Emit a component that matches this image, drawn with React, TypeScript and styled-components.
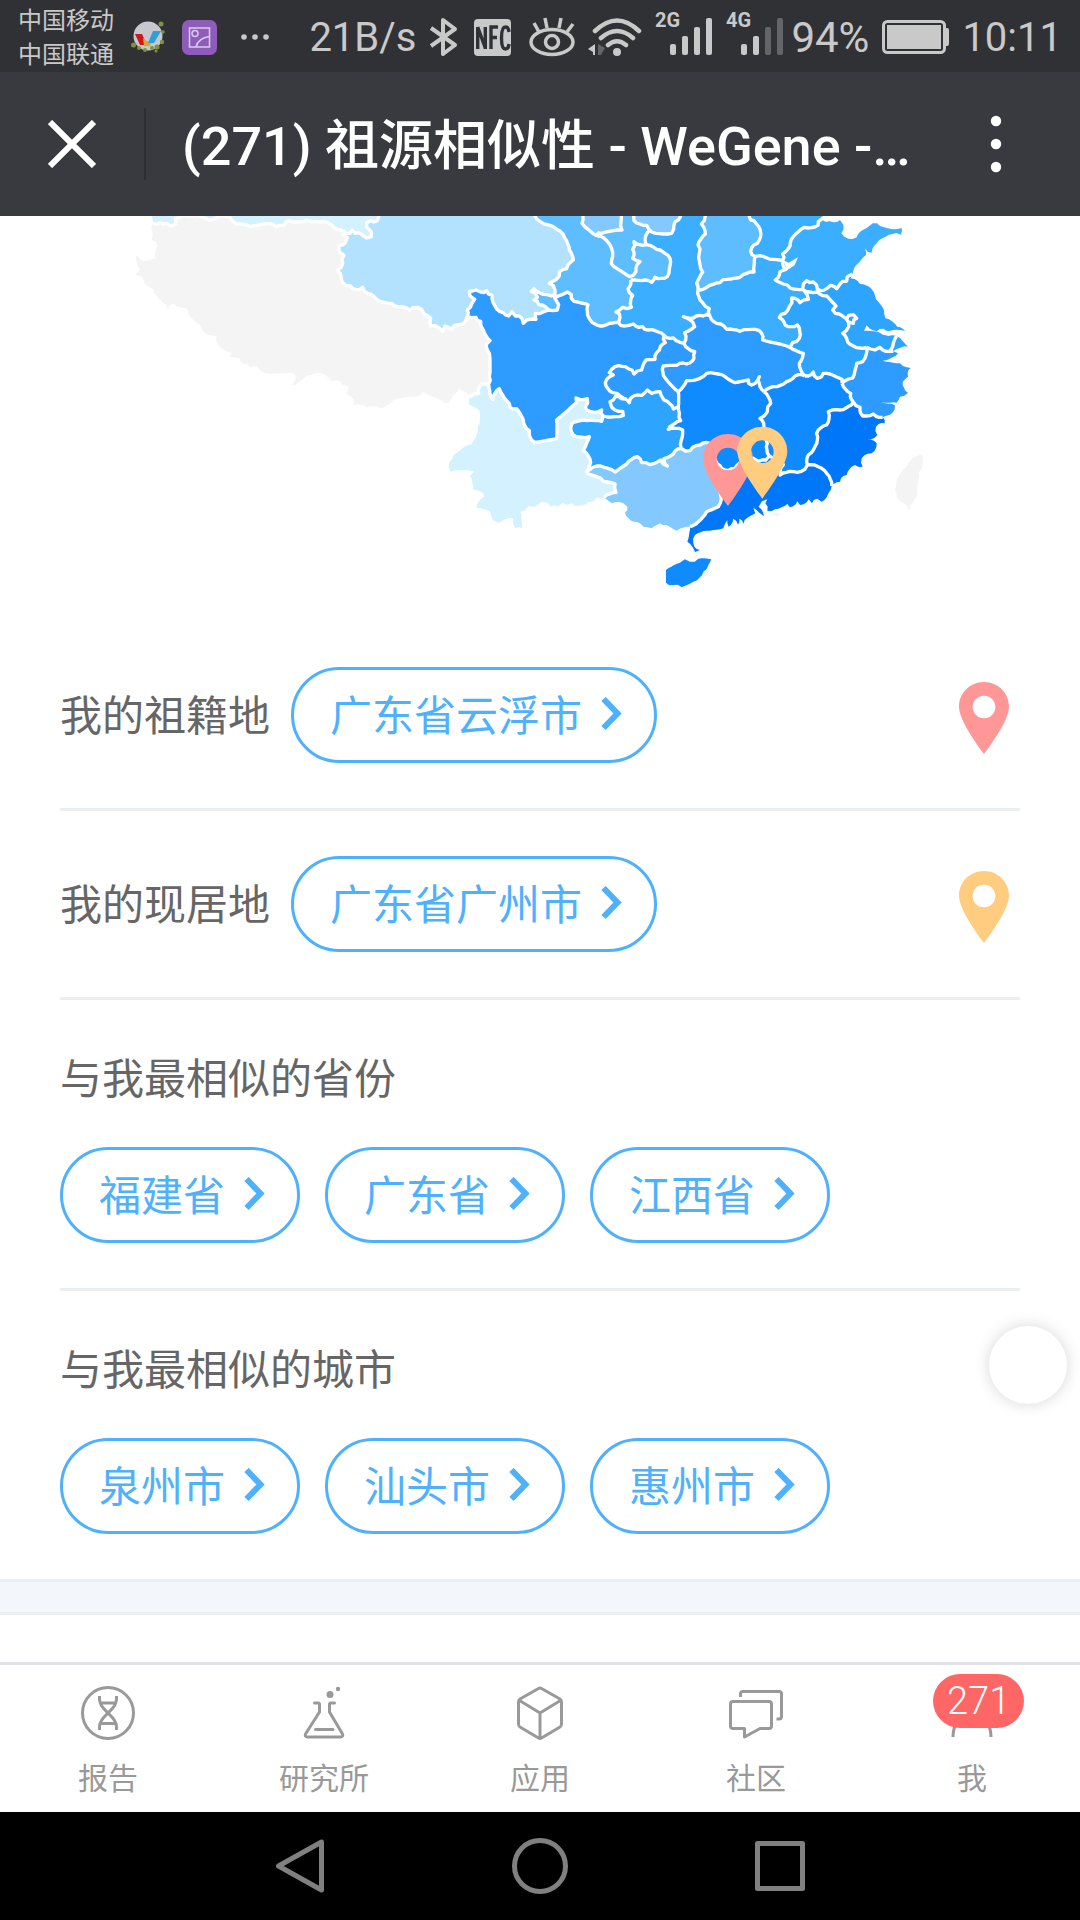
import React from 'react';
import styled, { createGlobalStyle } from 'styled-components';

/* ---------- map geometry: shared arcs joined into provinces ---------- */

type Pt = [number, number];

const roughen = (pts: Pt[]): Pt[] => {
  const out: Pt[] = [pts[0]];
  for (let i = 1; i < pts.length; i++) {
    const [ax, ay] = pts[i - 1];
    const [bx, by] = pts[i];
    const len = Math.hypot(bx - ax, by - ay);
    const steps = Math.min(5, Math.floor(len / 9));
    for (let s = 1; s < steps; s++) {
      const t = s / steps;
      const k = Math.sin(ax * 12.9 + ay * 78.2 + s * 37.7) * 4.5;
      out.push([
        Math.round(ax + (bx - ax) * t - ((by - ay) / len) * k),
        Math.round(ay + (by - ay) * t + ((bx - ax) / len) * k),
      ]);
    }
    out.push([bx, by]);
  }
  return out;
};

const arc = (dx: number, src: string): Pt[] =>
  roughen(
    src
      .trim()
      .split(/\s+/)
      .map((p) => {
        const [x, y] = p.split(',').map(Number);
        return [x + dx, y] as Pt;
      }),
  );

const W = 0;
const M = 1020;
const E = 1680;

const rev = (a: Pt[]) => [...a].reverse();
const line = (a: Pt[]) => 'M' + a.map((p) => p.join(' ')).join('L');
const area = (...arcs: Pt[][]) => line(arcs.flat()) + 'Z';

const xjTb = arc(W, '100,40 120,38 140,40 155,49 168,40 166,26 190,14 230,14 250,22 262,28 285,26 300,18 330,22 338,34 362,42 390,50 430,42 460,43 468,51 492,46 508,32 560,30 610,34 635,44 662,60 678,70');
const xjQh = arc(W, '678,70 690,70 697,60 705,70 725,74 740,84 754,80 754,65 740,52 740,38 752,32 772,32 776,20 776,0');
const tbQh = arc(W, '678,70 668,74 682,82 676,98 658,108 660,128 672,136 668,160 652,180 664,204 678,226 698,236 728,232 742,250 770,268 815,280 835,290 868,300 893,292 912,312 932,325 932,348 958,354 968,364 975,348 995,358 1002,346 1028,342 1042,318');
const tbSc = arc(W, '1042,318 1068,322 1082,334 1090,360 1110,392 1098,404 1108,430 1108,500 1106,522');
const tbYn = arc(W, '1106,522 1084,522 1076,550 1050,562');
const tbSea = arc(W, '1050,562 1034,545 1018,535 1000,555 992,570 975,580 940,562 910,546 880,560 820,570 780,594 740,592 700,585 702,570 678,550 684,528 660,514 635,515 605,490 590,488 560,496 518,528 528,505 515,488 435,490 410,468 390,472 368,460 358,444 328,440 336,430 300,410 290,378 255,370 240,345 205,312 200,294 160,280 143,298 138,284 108,256 102,238 75,222 66,198 46,192 60,178 50,155 50,135 62,148 80,152 106,144 114,108 94,90 96,60 100,40');
const ynSea = arc(W, '1050,562 1048,585 1076,598 1074,650 1062,690 1055,702 1028,714 1000,735 988,755 992,785 1062,785 1050,798 1060,840 1092,852 1090,862 1070,895 1110,905 1118,930 1140,938 1180,925 1186,955 1208,955 1204,925 1200,905 1225,888 1245,890 1265,876 1292,890 1305,885 1310,890 1328,878 1340,885 1355,880 1365,888 1400,882 1406,876 1430,862 1452,862');
const scQh = arc(M, '22,318 22,300 36,280 44,268 30,258 28,244 48,240 62,246 80,242 96,256 104,286 130,308 146,318 156,305 166,318 186,326 190,340 200,330 228,328 226,310 250,306 266,300');
const qhGs = arc(M, '266,300 256,290 236,284 222,270 232,262 214,245 222,236 262,254 285,254 285,240 268,220 290,208 298,186 320,176 340,150 328,120 314,84 290,58 262,44 225,18 210,0');
const gsSc = arc(M, '266,300 292,300 296,284 284,264 306,254 322,246 334,254 342,274 384,284 388,326 408,344 440,344 476,338');
const gsSn = arc(M, '476,338 480,322 468,306 488,292 514,292 518,256 504,236 512,210');
const gsSn2 = arc(M, '512,210 545,212 575,217 585,202 622,200 630,145 590,118 558,104 555,90 572,60');
const nxGs = arc(M, '412,78 440,92 455,115 455,150 462,170 490,188 508,200 528,185 540,155 518,145 518,118 522,95 558,104');
const nmWest = arc(M, '366,0 366,40 408,76 425,70 486,60 490,0');
const nmEast = arc(M, '530,0 522,32 560,46 575,66 635,70 642,44 655,30 662,0');
const snSc = arc(M, '476,338 492,348 520,342 548,350 565,360 612,376');
const snCq = arc(M, '612,376 640,384 672,400');
const snHb = arc(M, '672,400 674,368 704,350 698,336 670,320 700,324 730,318 750,318');
const snHa = arc(E, '90,318 88,296 68,278 54,240');
const snSx = arc(E, '54,240 50,220 68,186 58,130 54,105 76,72 64,42 76,18 76,0');
const sxHa = arc(E, '54,240 80,232 120,218 142,208 180,202 222,186 226,140');
const sxHe = arc(E, '226,140 212,124 232,100 242,68 228,40 212,30 212,0');
const haHe = arc(E, '226,140 252,140 270,148 308,152');
const heSd = arc(E, '308,152 308,132 330,108 340,80 372,52 414,46 424,28 440,0');
const haSd = arc(E, '308,152 318,178 300,185 286,210 310,222 330,234 368,238');
const sdSea = arc(E, '424,28 450,34 480,30 490,44 484,70 505,86 530,82 548,60 578,40 600,48 640,58 665,54 662,74 638,72 590,100 575,128 555,115 558,135 522,175 518,192');
const sdJs = arc(E, '518,192 502,200 500,214 480,222 470,236 452,226 440,236 412,238 400,216 380,212 370,222 368,238');
const jsSea = arc(E, '518,192 512,205 540,222 574,236 588,268 612,300 616,325 652,350 676,364 640,360 610,356 590,364 560,346 552,362 600,368 636,376 660,384 684,410 640,424');
const jsZj = arc(E, '640,424 630,424 600,412 585,420 560,412');
const shanghai = arc(E, '626,426 640,400 650,378');
const zjSea = arc(E, '640,424 654,430 608,452 660,460 692,474 684,500 668,515 684,548 660,560 650,578 598,580 645,586 630,614 608,622');
const zjFj = arc(E, '608,622 580,612 548,618 540,592 520,576');
const zjJx = arc(E, '520,576 512,550 486,520');
const zjAh = arc(E, '486,520 518,504 530,460 548,455 560,412');
const ahJs = arc(E, '560,412 520,408 500,385 488,370 506,350 500,328 478,312 458,300 468,288 440,258 412,246 368,238');
const lake = arc(E, '500,328 506,316 520,314 530,325 520,340 506,336');
const haAh = arc(E, '368,238 385,268 360,278 335,264 328,290 315,310 298,322 316,346 352,345 358,385 338,398 330,412');
const haHb = arc(E, '330,412 290,400 248,390 238,362 180,364 140,358 110,340 90,318');
const ahHb = arc(E, '330,412 370,430 358,460 375,498');
const ahJx = arc(E, '375,498 400,486 412,505 430,490 450,492 486,508 486,520');
const hbJx = arc(E, '375,498 345,498 320,515 280,530 252,545');
const hbHn = arc(E, '252,545 238,520 238,500 215,525 205,510 165,518 135,500 80,490 60,505 20,512 -5,545');
const cqHb = arc(M, '672,400 704,425 702,445 680,462 650,466 610,468 616,505 655,545');
const scCq = arc(M, '612,376 616,398 598,420 585,448 558,450 545,480 522,492 505,476 465,470 448,488 460,495 436,518 458,548 480,558 500,568');
const scGz = arc(M, '500,568 484,566 466,560 450,575 455,592 488,604 490,616 430,618');
const cqGz = arc(M, '500,568 508,578 520,558 545,556 562,540 575,550 600,545 612,570 640,597 655,590');
const cqHn = arc(M, '655,545 655,590');
const gzHn = arc(M, '655,590 658,610 662,632 625,658 668,660 664,690 664,715');
const gzGx = arc(M, '664,715 640,732 612,746 622,768 602,750 570,764 545,758 532,740 500,762 465,786 410,768 378,790');
const gzYn = arc(M, '430,618 425,634 380,632 335,642 340,675 388,680 370,722 392,758 378,790');
const ynSc = arc(M, '86,522 92,560 98,568 118,536 140,572 150,592 170,596 190,630 208,662 215,690 235,696 290,686 290,630 325,600 350,578 348,564 382,566 376,590 390,604 425,600 430,618');
const ynGx = arc(M, '378,790 410,800 430,814 465,822 468,848 432,862');
const gxSea = arc(M, '432,862 455,880 490,880 502,890 495,908 520,935 550,950 575,955 600,940 620,945 650,962 690,950');
const gxGd = arc(E, '30,950 55,935 80,905 115,890 122,855 118,800 112,762');
const gxHn = arc(E, '4,715 30,722 60,705 90,700 100,730 112,762');
const gdHn = arc(E, '112,762 125,775 145,782 165,775 178,760 195,750 215,742 235,754 258,750 268,738');
const hnJx = arc(E, '252,545 272,580 262,605 240,625 252,650 262,700 268,738');
const gdJx = arc(E, '268,738 310,764 300,795 340,785 375,778 382,765');
const jxFj = arc(E, '382,765 385,735 405,710 410,670 440,645 445,605 480,600 520,576');
const fjGd = arc(E, '382,765 415,770 440,790 455,828');
const fjSea = arc(E, '608,622 614,640 588,650 592,675 562,690 590,700 575,730 545,745 548,770 525,765 500,795 480,815 455,828');
const gdSea = arc(E, '455,828 445,850 425,875 412,866 396,880 386,868 360,885 352,874 330,892 322,882 285,898 262,902 256,880 262,868 246,874 236,890 252,918 230,900 220,884 226,910 204,922 190,942 178,926 174,944 160,926 146,950 142,930 130,955 80,962 45,975 40,1000 60,1020 45,1026 22,995 30,950');
const hainan = arc(M, '618,1080 660,1058 675,1048 690,1055 715,1046 754,1048 745,1065 730,1085 700,1115 665,1132 640,1125 618,1118 618,1080');
const taiwan = arc(E, '708,740 720,732 728,738 725,775 718,800 712,845 690,885 688,902 680,885 650,862 645,840 650,810 680,770 708,740');

const top = (x1: number, x2: number): Pt[] => [[x1, 0], [x2, 0]];

const provinces: { name: string; fill: string; d: string }[] = [
  { name: '新疆', fill: '#d4f1ff', d: area([[92, 0]], xjTb, xjQh) },
  { name: '西藏', fill: '#f4f4f4', d: area(xjTb, tbQh, tbSc, tbYn, tbSea) },
  { name: '青海', fill: '#b3e2ff', d: area(rev(xjQh), tbQh, scQh, qhGs) },
  { name: '甘肃', fill: '#5ebdff', d: area(rev(qhGs), gsSc, gsSn, gsSn2, top(1680, 1230)) },
  { name: '陕西', fill: '#3caeff', d: area(gsSn2, top(1660, 1756), rev(snSx), rev(snHa), rev(snHb), rev(snCq), rev(snSc), gsSn) },
  { name: '内蒙古西', fill: '#83c9ff', d: area(nmWest) },
  { name: '内蒙古东', fill: '#83c9ff', d: area(nmEast) },
  { name: '山西', fill: '#5ebdff', d: area(rev(snSx), sxHa, sxHe) },
  { name: '河北', fill: '#3caeff', d: area(rev(sxHe), haHe, heSd) },
  { name: '山东', fill: '#3caeff', d: area(rev(heSd).slice(1), haSd, rev(sdJs), rev(sdSea)) },
  { name: '河南', fill: '#3caeff', d: area(haHe, haSd, haAh, haHb, snHa, sxHa) },
  { name: '江苏', fill: '#2da5ff', d: area(rev(sdJs), jsSea, jsZj, ahJs) },
  { name: '安徽', fill: '#2da5ff', d: area(rev(ahJs), haAh, ahHb, ahJx, zjAh) },
  { name: '浙江', fill: '#2d9bff', d: area(rev(jsZj), zjSea, zjFj, zjJx, zjAh) },
  { name: '湖北', fill: '#2d9bff', d: area(snHb, rev(haHb), ahHb, hbJx, hbHn, rev(cqHb)) },
  { name: '重庆', fill: '#2d9bff', d: area(snCq, cqHb, cqHn, rev(cqGz), rev(scCq)) },
  { name: '四川', fill: '#2d9bff', d: area(scQh, gsSc, snSc, scCq, scGz, rev(ynSc), rev(tbSc)) },
  { name: '云南', fill: '#d4f1ff', d: area(tbYn, ynSea, rev(ynGx), rev(gzYn), rev(ynSc)) },
  { name: '贵州', fill: '#2da5ff', d: area(cqGz, gzHn, gzGx, rev(gzYn), rev(scGz)) },
  { name: '广西', fill: '#83c9ff', d: area(rev(gzGx), gxHn, rev(gxGd), rev(gxSea), rev(ynGx)) },
  { name: '湖南', fill: '#0f8aff', d: area(rev(hbHn), hnJx, rev(gdHn), rev(gxHn), rev(gzHn), rev(cqHn)) },
  { name: '江西', fill: '#0f8aff', d: area(rev(hbJx), ahJx, rev(zjJx), rev(jxFj), rev(gdJx), rev(hnJx)) },
  { name: '福建', fill: '#0077f8', d: area(jxFj, rev(zjFj), fjSea, rev(fjGd)) },
  { name: '广东', fill: '#0077f8', d: area(gdHn, gdJx, fjGd, gdSea, gxGd) },
  { name: '海南', fill: '#0f8aff', d: area(hainan) },
  { name: '台湾', fill: '#f4f4f4', d: area(taiwan) },
];

const borders = [
  xjTb, xjQh, tbQh, tbSc, tbYn, scQh, qhGs, gsSc, gsSn, gsSn2, nxGs, nmWest, nmEast, snSc, snCq, snHb, snHa,
  snSx, sxHa, sxHe, haHe, heSd, haSd, sdJs, jsZj, shanghai, zjFj, zjJx, zjAh, ahJs, lake, haAh, haHb, ahHb,
  ahJx, hbJx, hbHn, cqHb, scCq, scGz, cqGz, cqHn, gzHn, gzGx, gzYn, ynSc, ynGx, gxGd, gxHn, gdHn, hnJx,
  gdJx, jxFj, fjGd,
].map(line).join('');

const PIN = 'M75 0C33 0 0 33 0 74c0 32 34 86 75 142 41-56 75-110 75-142C150 33 117 0 75 0zm0 41a34 34 0 1 1 0 68 34 34 0 0 1 0-68z';
const PINK = '#ff9797';
const AMBER = '#ffcc80';

/* ---------- styles ---------- */

const Global = createGlobalStyle`
  * { box-sizing: border-box; }
  body {
    margin: 0;
    background: #fff;
    font-family: Roboto, 'Noto Sans CJK SC', sans-serif;
  }
  a { color: inherit; text-decoration: none; }
  button { border: 0; padding: 0; background: none; color: inherit; font: inherit; }
  svg { display: block; flex: none; }
`;

const Screen = styled.div`
  display: flex;
  flex-direction: column;
  min-height: 100vh;
`;

const StatusBar = styled.div`
  display: flex;
  align-items: center;
  justify-content: space-between;
  height: 72px;
  padding: 2px 18px 0;
  background: #303135;
  color: #c9c9c9;
`;

const StatusGroup = styled.div<{ $gap: number }>`
  display: flex;
  align-items: center;
  gap: ${(p) => p.$gap}px;
`;

const Carriers = styled.div`
  padding-top: 2px;
  font-size: 24px;
  line-height: 34px;
`;

const StatusText = styled.span<{ $large?: boolean }>`
  padding-top: 2px;
  font-size: ${(p) => (p.$large ? 42 : 40)}px;
  line-height: 68px;
`;

const Header = styled.header`
  display: flex;
  align-items: center;
  height: 144px;
  padding-right: 59px;
  background: #393a3f;
  color: #fff;
`;

const CloseButton = styled.button`
  display: flex;
  align-items: center;
  justify-content: center;
  width: 146px;
  height: 72px;
  border-right: 2px solid #2d2e32;
`;

const Title = styled.h1`
  flex: 1;
  min-width: 0;
  margin: 0;
  padding: 6px 0 0 36px;
  font-size: 54px;
  font-weight: 500;
  line-height: 72px;
  white-space: nowrap;
`;

const MenuButton = styled.button`
  display: flex;
  justify-content: center;
  width: 50px;
`;

const Main = styled.main`
  flex: 1;
  background: #fff;
`;

const MapView = styled.svg`
  width: 100%;
  height: auto;
`;

const Sections = styled.div`
  padding: 0 60px;
  color: #666;
  font-size: 42px;
  line-height: 68px;
`;

const Section = styled.section`
  padding: 45px 0;
  border-bottom: 3px solid #ebeff2;
  &:last-child { border-bottom: 0; }
`;

const PlaceRow = styled(Section)`
  display: flex;
  align-items: center;
  gap: 21px;
`;

const PlaceLabel = styled.span`
  padding-top: 4px;
`;

const RowPin = styled.svg`
  margin: 0 11px 0 auto;
`;

const SectionTitle = styled.h2`
  margin: 0 0 33px;
  padding-top: 1px;
  font-size: inherit;
  font-weight: 400;
`;

const PillList = styled.div`
  display: flex;
  flex-wrap: wrap;
  gap: 25px;
`;

const PillLink = styled.a`
  display: flex;
  align-items: center;
  gap: 19px;
  height: 96px;
  padding: 0 32px 0 36px;
  border: 3px solid #4fb1fc;
  border-radius: 48px;
  color: #4fb1fc;
  white-space: nowrap;
`;

const PillText = styled.span`
  padding-top: 4px;
`;

const Divider = styled.div`
  height: 36px;
  border: solid #ebeff2;
  border-width: 3px 0;
  background: #f3f6fa;
`;

const FloatingButton = styled.button`
  position: fixed;
  right: 13px;
  bottom: 516px;
  width: 78px;
  height: 78px;
  border-radius: 50%;
  background: #fff;
  box-shadow: 0 0 16px rgba(0, 0, 0, 0.16);
`;

const TabBar = styled.nav`
  display: flex;
  height: 150px;
  border-top: 3px solid #dfe3e6;
  background: #fff;
  color: #999;
`;

const Tab = styled.a`
  flex: 1;
  display: flex;
  flex-direction: column;
  align-items: center;
  gap: 16px;
  padding-top: 18px;
  font-size: 30px;
  line-height: 40px;
`;

const TabIcon = styled.span`
  position: relative;
  width: 60px;
  height: 60px;
`;

const Badge = styled.span`
  position: absolute;
  top: -9px;
  left: -9px;
  padding: 0 14px;
  border-radius: 27px;
  background: #f66;
  color: #fff;
  font-size: 38px;
  font-weight: 300;
  line-height: 54px;
`;

const SystemNav = styled.nav`
  display: flex;
  justify-content: center;
  height: 108px;
  background: #000;
`;

const NavButton = styled.button`
  display: flex;
  align-items: center;
  justify-content: center;
  width: 240px;
`;

/* ---------- parts ---------- */

const Stroke = ({ children }: { children: React.ReactNode }) => (
  <svg width="60" height="60" viewBox="0 0 60 60" fill="none" stroke="currentColor" strokeWidth="3" strokeLinejoin="round">
    {children}
  </svg>
);

const Signal = ({ label, level }: { label: string; level: number }) => (
  <svg width="58" height="64" viewBox="0 0 58 64" fill="currentColor">
    <text x="0" y="22" fontSize="20" fontWeight="700" fontFamily="Roboto, sans-serif">{label}</text>
    {[11, 19, 28, 37].map((h, i) => (
      <rect key={h} x={15 + i * 12} y={50 - h} width="6" height={h} rx="2" fill={i < level ? 'currentColor' : '#646569'} />
    ))}
  </svg>
);

const Pill = ({ children }: { children: string }) => (
  <PillLink href="#">
    <PillText>{children}</PillText>
    <svg width="21" height="36" viewBox="0 0 21 36" fill="none" stroke="currentColor" strokeWidth="6">
      <path d="M2.500 2l14 14.500-14 14.500" />
    </svg>
  </PillLink>
);

const Place = ({ label, value, color }: { label: string; value: string; color: string }) => (
  <PlaceRow>
    <PlaceLabel>{label}</PlaceLabel>
    <Pill>{value}</Pill>
    <RowPin width="50" height="78" viewBox="0 -18 150 234"><path d={PIN} fill={color} /></RowPin>
  </PlaceRow>
);

const Similar = ({ title, items }: { title: string; items: string[] }) => (
  <Section>
    <SectionTitle>{title}</SectionTitle>
    <PillList>{items.map((it) => <Pill key={it}>{it}</Pill>)}</PillList>
  </Section>
);

const tabs = [
  {
    label: '报告',
    icon: (
      <Stroke>
        <ellipse cx="30" cy="30" rx="25.500" ry="25.500" />
        <path d="M21.500 13v3c0 7 5 10.500 8.500 14s8.500 7 8.500 14v3M38.500 13v3c0 7-5 10.500-8.500 14s-8.500 7-8.500 14v3M23 20h14M23 40.500h14" />
      </Stroke>
    ),
  },
  {
    label: '研究所',
    icon: (
      <Stroke>
        <path strokeLinecap="round" d="M20.500 20h3.500q1.500 0 1.500 1.500v7.500L11.500 51q-1 3 2 3h33q3 0 2-3L35.500 29v-7.500q0-1.500 1.500-1.500h3.500M21.500 46.500h17.500" />
        <circle cx="36" cy="11.500" r="3.500" fill="currentColor" stroke="none" />
        <circle cx="44" cy="6" r="2.200" fill="currentColor" stroke="none" />
      </Stroke>
    ),
  },
  {
    label: '应用',
    icon: (
      <Stroke>
        <path d="M28.500 5.500Q30 4.500 31.500 5.500L50 16Q51.500 17 51.500 19V41Q51.500 43 50 44L31.500 55Q30 56 28.500 55L10 44Q8.500 43 8.500 41V19Q8.500 17 10 16ZM9.500 17.500L30 30 50.500 17.500M30 30V55" />
      </Stroke>
    ),
  },
  {
    label: '社区',
    icon: (
      <Stroke>
        <path d="M8 18.500h35q2.500 0 2.500 2.500v22q0 2.500-2.500 2.500H34L18.500 54V45.500H7q-2.500 0-2.500-2.500V21q0-2.500 2.500-2.500z" />
        <path d="M14.500 14v-3q0-2.500 2.500-2.500h36q2.500 0 2.500 2.500v22.500q0 2.500-2.500 2.500h-2.500" />
      </Stroke>
    ),
  },
  {
    label: '我',
    badge: '271',
    icon: (
      <Stroke>
        <circle cx="30" cy="18" r="11" />
        <path d="M11 54c0-13 7-21 19-21s19 8 19 21" />
      </Stroke>
    ),
  },
];

export default function App() {
  return (
    <Screen>
      <Global />
      <StatusBar>
        <StatusGroup $gap={17}>
          <Carriers>
            <div>中国移动</div>
            <div>中国联通</div>
          </Carriers>
          <svg width="34" height="34" viewBox="0 0 34 34">
            <circle cx="17" cy="16" r="14.500" fill="#c6c8ce" />
            <path d="M4 14h7l5 11h-7z" fill="#d01818" />
            <path d="M12 18l5 4 5-4-3 8h-6z" fill="#d9a62e" />
            <path d="M22 11h8l-7 12h-6z" fill="#2f9fd8" />
            <g fill="#7d9440">
              <circle cx="30" cy="4" r="2.500" /><circle cx="32" cy="12" r="1.800" /><circle cx="2.500" cy="25" r="2.500" />
              <circle cx="8" cy="28" r="2" /><circle cx="14" cy="30" r="2" /><circle cx="21" cy="28" r="2" />
              <circle cx="26" cy="27" r="2.500" /><circle cx="31" cy="22" r="2.200" /><circle cx="25" cy="31" r="1.500" />
            </g>
          </svg>
          <svg width="35" height="35" viewBox="0 0 35 35" fill="none" stroke="#dccbee" strokeWidth="1.500">
            <rect width="35" height="35" rx="7" fill="#8e5dba" stroke="none" />
            <path d="M7.500 8h20v19h-20zM14 27q2-9 13.500-10.500" />
            <circle cx="13" cy="13.500" r="3" />
          </svg>
          <svg width="36" height="8" viewBox="0 0 36 8" fill="currentColor">
            <circle cx="10" cy="4" r="2.800" /><circle cx="21" cy="4" r="2.800" /><circle cx="32" cy="4" r="2.800" />
          </svg>
        </StatusGroup>
        <StatusGroup $gap={13}>
          <StatusText>21B/s</StatusText>
          <svg width="30" height="40" viewBox="0 0 30 40" fill="none" stroke="currentColor" strokeWidth="4" strokeLinejoin="round">
            <path d="M2 11l24 17-12 9V3l12 9L2 29" />
          </svg>
          <svg width="39" height="37" viewBox="-2 0 39 37">
            <rect width="37" height="37" rx="4" fill="currentColor" />
            <g fill="none" stroke="#303135" strokeWidth="3.400">
              <path d="M3.700 30V8M3.700 8l7.600 21M11.300 30V8M17 30V8h7M17 18.500h6M35 13q-.5-5-3.500-5-4 0-4 11t4 11q3 0 3.500-5" />
            </g>
          </svg>
          <svg width="51" height="40" viewBox="-4 0 51 40" fill="none" stroke="currentColor" strokeWidth="3.500">
            <ellipse cx="24" cy="25" rx="21" ry="12.500" />
            <circle cx="24" cy="25" r="6.500" />
            <path d="M6 6l5 9M17 1l2 10M33 1l-2 10M45 7l-6 8" />
          </svg>
          <svg width="54" height="40" viewBox="0 0 54 40" fill="none" stroke="currentColor" strokeWidth="4.500" strokeLinecap="round">
            <path d="M7 14q22-21 44 0M13 21q16-14 32 0M20 28q9-7.500 18 0" />
            <circle cx="29" cy="35" r="4" fill="currentColor" stroke="none" />
            <path d="M7 27v11H5v-3L0 32z" fill="currentColor" stroke="none" />
            <path d="M10 38V27l7 4-4 7z" fill="#646569" stroke="none" />
          </svg>
          <Signal label="2G" level={4} />
          <StatusGroup $gap={7}>
            <Signal label="4G" level={2} />
            <StatusText $large>94%</StatusText>
          </StatusGroup>
          <svg width="67" height="34" viewBox="0 0 67 34">
            <rect x="1.500" y="1.500" width="61" height="31" rx="4" fill="none" stroke="currentColor" strokeWidth="3" />
            <rect x="5" y="5" width="54" height="24" fill="currentColor" />
            <path d="M63 8h2q2 0 2 2v14q0 2-2 2h-2z" fill="currentColor" />
          </svg>
          <StatusText>10:11</StatusText>
        </StatusGroup>
      </StatusBar>

      <Header>
        <CloseButton aria-label="关闭">
          <svg width="48" height="48" viewBox="0 0 48 48" fill="none" stroke="currentColor" strokeWidth="6">
            <path d="M2 2l44 44M46 2L2 46" />
          </svg>
        </CloseButton>
        <Title>(271) 祖源相似性 - WeGene -…</Title>
        <MenuButton aria-label="菜单">
          <svg width="12" height="58" viewBox="0 0 12 58" fill="currentColor">
            <circle cx="6" cy="6" r="5.200" /><circle cx="6" cy="29" r="5.200" /><circle cx="6" cy="52" r="5.200" />
          </svg>
        </MenuButton>
      </Header>

      <Main>
        <MapView viewBox="-360 18 3240 1218" role="img" aria-label="祖源相似性地图">
          {provinces.map((p) => <path key={p.name} d={p.d} fill={p.fill} />)}
          <path d={borders} fill="none" stroke="#fff" strokeWidth="10" strokeLinejoin="round" />
          <path d="M1988 150l18 8 28-16-10 24-22 14z" fill="#fff" />
          <path d="M1955 914l14-7 16 8-14 4z" fill="#f4f4f4" />
          <path d={PIN} fill={PINK} fillRule="evenodd" transform="translate(1749 672)" />
          <path d={PIN} fill={AMBER} fillRule="evenodd" transform="translate(1852 650)" />
        </MapView>

        <Sections>
          <Place label="我的祖籍地" value="广东省云浮市" color={PINK} />
          <Place label="我的现居地" value="广东省广州市" color={AMBER} />
          <Similar title="与我最相似的省份" items={['福建省', '广东省', '江西省']} />
          <Similar title="与我最相似的城市" items={['泉州市', '汕头市', '惠州市']} />
        </Sections>
        <Divider />
      </Main>

      <FloatingButton aria-label="快捷操作" />

      <TabBar>
        {tabs.map((t) => (
          <Tab key={t.label} href="#">
            <TabIcon>
              {t.icon}
              {t.badge && <Badge>{t.badge}</Badge>}
            </TabIcon>
            {t.label}
          </Tab>
        ))}
      </TabBar>

      <SystemNav>
        <NavButton aria-label="返回">
          <svg width="60" height="60" viewBox="0 0 60 60" fill="none" stroke="#808080" strokeWidth="5" strokeLinejoin="round">
            <path d="M51.500 6v48L8.500 30z" />
          </svg>
        </NavButton>
        <NavButton aria-label="主页">
          <svg width="60" height="60" viewBox="0 0 60 60" fill="none" stroke="#808080" strokeWidth="5"><circle cx="30" cy="30" r="25.500" /></svg>
        </NavButton>
        <NavButton aria-label="最近任务">
          <svg width="60" height="60" viewBox="0 0 60 60" fill="none" stroke="#808080" strokeWidth="5" strokeLinejoin="round"><path d="M7.500 7.500h45v45h-45z" /></svg>
        </NavButton>
      </SystemNav>
    </Screen>
  );
}
